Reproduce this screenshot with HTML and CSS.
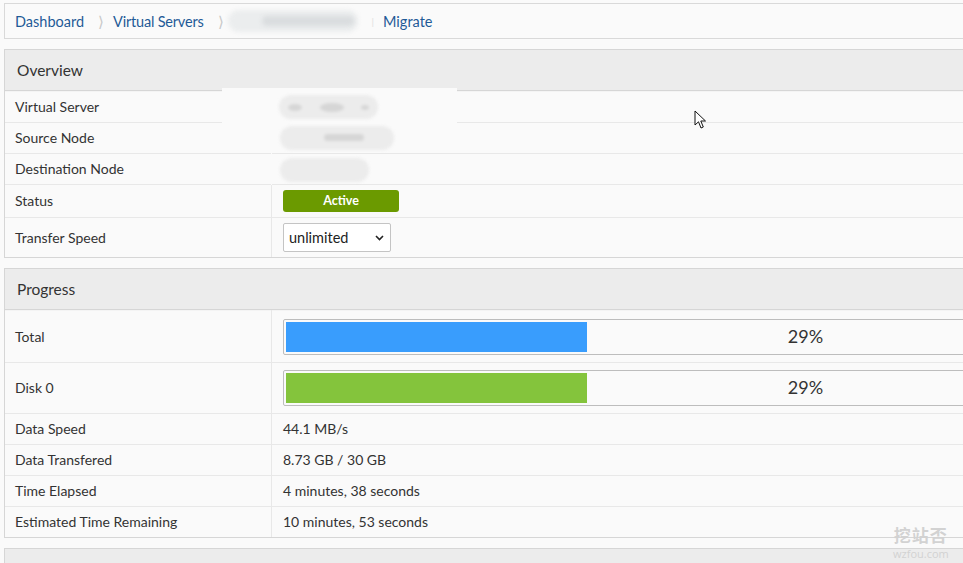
FILE: index.html
```html
<!DOCTYPE html>
<html lang="en">
<head>
  <meta charset="UTF-8" />
  <title>Migrate</title>
  <link rel="stylesheet" href="styles.css">
</head>
<body>
  <div class="page">

    <!-- breadcrumb -->
    <div class="crumbs">
      <a href="#">Dashboard</a>
      <span class="sep">&#x27E9;</span>
      <a href="#">Virtual Servers</a>
      <span class="sep">&#x27E9;</span>
      <span class="blurred crumb-name">
        <span class="blob b-wide"></span>
        <span class="blob b-dark"></span>
      </span>
      <span class="sep faint">|</span>
      <a href="#">Migrate</a>
    </div>

    <!-- overview -->
    <div class="panel">
      <div class="panel-head">Overview</div>
      <div class="mask">
        <span class="smudge s1"><i class="dot d1"></i><i class="dot d2"></i><i class="dot d3"></i></span>
        <span class="smudge s2"><i class="dot d4"></i></span>
        <span class="smudge s3"></span>
      </div>
      <table class="info">
        <tr class="hidden-val"><td>Virtual Server</td><td></td></tr>
        <tr class="hidden-val"><td>Source Node</td><td></td></tr>
        <tr class="hidden-val"><td>Destination Node</td><td></td></tr>
        <tr><td>Status</td><td><span class="badge">Active</span></td></tr>
        <tr class="tall">
          <td>Transfer Speed</td>
          <td>
            <select class="speed">
              <option>unlimited</option>
              <option>100 MB/s</option>
              <option>50 MB/s</option>
            </select>
          </td>
        </tr>
      </table>
    </div>

    <!-- progress -->
    <div class="panel">
      <div class="panel-head">Progress</div>
      <table class="info">
        <tr class="bar-row">
          <td>Total</td>
          <td>
            <div class="bar">
              <div class="fill blue" style="width: 29%"></div>
              <span class="pct">29%</span>
            </div>
          </td>
        </tr>
        <tr class="bar-row">
          <td>Disk 0</td>
          <td>
            <div class="bar">
              <div class="fill green" style="width: 29%"></div>
              <span class="pct">29%</span>
            </div>
          </td>
        </tr>
        <tr><td>Data Speed</td><td>44.1 MB/s</td></tr>
        <tr><td>Data Transfered</td><td>8.73 GB / 30 GB</td></tr>
        <tr><td>Time Elapsed</td><td>4 minutes, 38 seconds</td></tr>
        <tr><td>Estimated Time Remaining</td><td>10 minutes, 53 seconds</td></tr>
      </table>
    </div>

    <div class="panel">
      <div class="panel-head">&nbsp;</div>
    </div>
  </div>

  <!-- mouse pointer -->
  <svg class="pointer" width="13" height="20" viewBox="0 0 13 20">
    <path d="M1 1 L1 15 L4.5 11.8 L7 18 L9.3 17 L6.8 11 L11.5 11 Z" fill="#fff" stroke="#111" stroke-width="1" stroke-linejoin="round"/>
  </svg>

  <div class="mark">
    <div class="mark-cn">挖站否</div>
    <div class="mark-en">wzfou.com</div>
  </div>
</body>
</html>
```

FILE: styles.css
```css
html, body {
  margin: 0;
  overflow: hidden;
}

body {
  background: #fafafa;
  font-family: Lato, "Liberation Sans", sans-serif;
  font-size: 14px;
  color: #333;
  padding: 3px 0 0 4px;
  position: relative;
  height: 563px;
}

.page {
  width: 1336px;
}

a {
  color: #1f5a97;
  text-decoration: none;
}

/* Breadcrumb */
.crumbs {
  display: flex;
  align-items: center;
  height: 34px;
  border: 1px solid #d9d9d9;
  padding: 0 10px;
  font-size: 14.5px;
  margin-bottom: 10px;
}

.crumbs a:nth-of-type(2) {
  letter-spacing: -0.2px;
}

.crumbs .sep {
  color: #c8c8c8;
  margin: 0 9px 0 14px;
  font-size: 15px;
}

.crumbs .sep.faint {
  color: #e0e0e0;
  font-size: 10px;
  margin: 0 9px 0 12px;
}

.blurred {
  position: relative;
  display: inline-block;
  width: 134px;
  height: 26px;
  margin-left: -7px;
}

.blob {
  position: absolute;
  border-radius: 13px;
  filter: blur(2px);
}

.b-wide {
  left: 2px; top: 2px; width: 130px; height: 22px;
  background: #ebedee;
}

.b-dark {
  left: 36px; top: 8px; width: 92px; height: 10px;
  background: #dadddf;
}

/* Panels */
.panel {
  border: 1px solid #d6d6d6;
  margin-bottom: 10px;
  position: relative;
}

.panel-head {
  background: #ececec;
  border-bottom: 1px solid #d6d6d6;
  height: 40px;
  line-height: 40px;
  padding: 0 12px;
  font-size: 15.5px;
  color: #333;
}

table.info {
  width: 100%;
  border-collapse: collapse;
  table-layout: fixed;
}

table.info td {
  border-top: 1px solid #e8e8e8;
  padding: 5px 11px;
  line-height: 20px;
  vertical-align: middle;
}

table.info tr:first-child td {
  border-top: 1px solid #f4f4f4;
}

table.info td:first-child {
  width: 245px;
  border-right: 1px solid #e8e8e8;
  padding-left: 10px;
}

table.info tr.hidden-val td:first-child {
  border-right-color: transparent;
}

/* white patch over the hidden values */
.mask {
  position: absolute;
  left: 217px;
  top: 38px;
  width: 235px;
  height: 65px;
  background: #fafafa;
  z-index: 2;
}

.smudge {
  position: absolute;
  background: #ececec;
  border-radius: 12px;
  filter: blur(1.5px);
}

.s1 { left: 57px; top: 7px; width: 99px; height: 24px; }
.s2 { left: 58px; top: 38px; width: 114px; height: 24px; }
.s3 { left: 58px; top: 70px; width: 89px; height: 24px; }

.dot {
  position: absolute;
  background: #d6d6d6;
  border-radius: 50%;
}

.d1 { left: 9px; top: 9px; width: 14px; height: 7px; }
.d2 { left: 41px; top: 8px; width: 24px; height: 9px; }
.d3 { left: 82px; top: 10px; width: 8px; height: 5px; }
.d4 { left: 44px; top: 8px; width: 40px; height: 7px; border-radius: 4px; }

.badge {
  display: block;
  width: 116px;
  height: 22px;
  line-height: 22px;
  background: #6b9a00;
  border-radius: 3px;
  color: #fff;
  font-weight: bold;
  font-size: 12.5px;
  text-align: center;
}

.speed {
  appearance: none;
  -webkit-appearance: none;
  width: 108px;
  height: 29px;
  border: 1px solid #c4c4c4;
  border-radius: 2px;
  background: #fff url("data:image/svg+xml,%3Csvg xmlns='http://www.w3.org/2000/svg' width='9' height='6'%3E%3Cpath d='M1 1l3.5 3.5L8 1' fill='none' stroke='%23222' stroke-width='1.6'/%3E%3C/svg%3E") no-repeat right 6px center;
  font-family: inherit;
  font-size: 14.5px;
  color: #222;
  padding: 0 5px;
}

/* Progress bars */
table.info tr.bar-row td {
  padding-top: 8px;
  padding-bottom: 7px;
}

table.info tr.bar-row + tr.bar-row td {
  padding-top: 7px;
}

.bar {
  position: relative;
  box-sizing: border-box;
  height: 36px;
  padding: 2px;
  border: 1px solid #bdbdbd;
  border-radius: 2px;
  background: #fafafa;
}

.fill {
  height: 30px;
}

.fill.blue { background: #399dfd; }
.fill.green { background: #84c43c; }

.pct {
  position: absolute;
  left: 0;
  right: 0;
  top: 0;
  bottom: 0;
  line-height: 32px;
  text-align: center;
  font-size: 18px;
  color: #333;
}

/* overlays */
.pointer {
  position: absolute;
  left: 694px;
  top: 110px;
}

.mark {
  position: absolute;
  left: 893px;
  top: 526px;
  text-align: center;
  color: #d2d2d2;
}

.mark-cn {
  font-family: "Noto Sans CJK SC", sans-serif;
  font-weight: bold;
  font-size: 17px;
  line-height: 17px;
  letter-spacing: 1px;
}

.mark-en {
  font-family: "Open Sans", sans-serif;
  font-size: 11px;
  line-height: 12px;
  margin-top: 5px;
}
```
